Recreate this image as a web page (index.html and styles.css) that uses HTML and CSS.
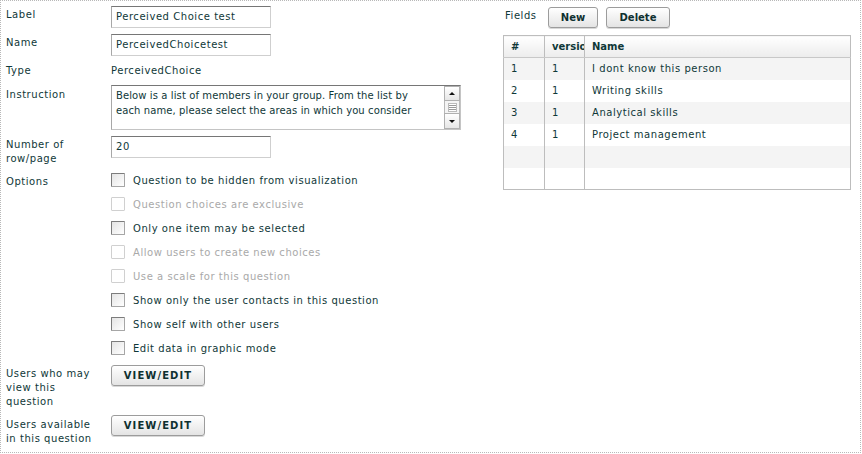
FILE: index.html
```html
<!DOCTYPE html>
<html>
<head>
<meta charset="utf-8">
<link rel="stylesheet" href="styles.css">
</head>
<body>
<div class="page">
  <div class="form">
    <div class="row r-input">
      <div class="lbl">Label</div>
      <div class="field"><div class="input">Perceived Choice test</div></div>
    </div>
    <div class="row r-input">
      <div class="lbl">Name</div>
      <div class="field"><div class="input">PerceivedChoicetest</div></div>
    </div>
    <div class="row r-type">
      <div class="lbl">Type</div>
      <div class="field plain">PerceivedChoice</div>
    </div>
    <div class="row r-area">
      <div class="lbl lbl-area">Instruction</div>
      <div class="field">
        <div class="textarea">
          <div class="ta-text">Below is a list of members in your group. From the list by<br>each name, please select the areas in which you consider</div>
          <div class="sbar">
            <div class="sb-btn"><span class="tri-up"></span></div>
            <div class="sb-thumb"><span class="grip"></span></div>
            <div class="sb-btn sb-down"><span class="tri-down"></span></div>
          </div>
        </div>
      </div>
    </div>
    <div class="row r-num">
      <div class="lbl">Number of<br>row/page</div>
      <div class="field"><div class="input">20</div></div>
    </div>
    <div class="row r-opts">
      <div class="lbl">Options</div>
      <div class="opts">
        <div class="opt"><span class="cb"></span><span>Question to be hidden from visualization</span></div>
        <div class="opt dis"><span class="cb"></span><span>Question choices are exclusive</span></div>
        <div class="opt"><span class="cb"></span><span>Only one item may be selected</span></div>
        <div class="opt dis"><span class="cb"></span><span>Allow users to create new choices</span></div>
        <div class="opt dis"><span class="cb"></span><span>Use a scale for this question</span></div>
        <div class="opt"><span class="cb"></span><span>Show only the user contacts in this question</span></div>
        <div class="opt"><span class="cb"></span><span>Show self with other users</span></div>
        <div class="opt"><span class="cb"></span><span>Edit data in graphic mode</span></div>
      </div>
    </div>
    <div class="row r-users">
      <div class="lbl">Users who may<br>view this<br>question</div>
      <div class="field"><button class="btn vbtn">VIEW/EDIT</button></div>
    </div>
    <div class="row r-users r-users2">
      <div class="lbl">Users available<br>in this question</div>
      <div class="field"><button class="btn vbtn">VIEW/EDIT</button></div>
    </div>
  </div>

  <div class="fields">
    <div class="f-head">
      <span class="f-title">Fields</span>
      <button class="btn sbtn new">New</button>
      <button class="btn sbtn del">Delete</button>
    </div>
    <table class="grid">
      <colgroup><col class="c1"><col class="c2"><col></colgroup>
      <thead>
        <tr><th>#</th><th>version</th><th>Name</th></tr>
      </thead>
      <tbody>
        <tr class="alt"><td>1</td><td>1</td><td>I dont know this person</td></tr>
        <tr><td>2</td><td>1</td><td>Writing skills</td></tr>
        <tr class="alt"><td>3</td><td>1</td><td>Analytical skills</td></tr>
        <tr><td>4</td><td>1</td><td>Project management</td></tr>
        <tr class="alt"><td></td><td></td><td></td></tr>
        <tr><td></td><td></td><td></td></tr>
      </tbody>
    </table>
  </div>
</div>
</body>
</html>
```

FILE: styles.css
```css
html, body {
  margin: 0;
  padding: 0;
  background: #fff;
}
body {
  font-family: "DejaVu Sans", Verdana, sans-serif;
  font-size: 10px;
  letter-spacing: 0.55px;
  color: #0f3838;
}
.page {
  box-sizing: border-box;
  width: 861px;
  height: 453px;
  border: 1px dotted #b8b8b8;
  padding: 5px 9px 0 5px;
  display: grid;
  grid-template-columns: 497px 348px;
  align-items: start;
}
.form {
  display: flex;
  flex-direction: column;
  gap: 6px;
}
.row {
  display: flex;
}
.lbl {
  width: 105px;
  flex: none;
  line-height: 14px;
  padding-top: 2px;
  white-space: nowrap;
}
.field {
  flex: 1;
}
.input {
  box-sizing: border-box;
  width: 160px;
  height: 22px;
  border: 1px solid;
  border-color: #767676 #cfcfcf #cfcfcf #a8a8a8;
  padding: 0 4px;
  line-height: 20px;
  white-space: nowrap;
  overflow: hidden;
}
.r-type .lbl, .r-type .plain {
  padding-top: 0;
  line-height: 17px;
}
.lbl-area {
  padding-top: 3px;
}
.textarea {
  box-sizing: border-box;
  width: 350px;
  height: 45px;
  border: 1px solid;
  border-color: #767676 #c4c4c4 #c4c4c4 #a8a8a8;
  display: flex;
}
.ta-text {
  flex: 1;
  padding: 2px 0 0 4px;
  line-height: 15px;
  letter-spacing: 0.1px;
  white-space: nowrap;
  overflow: hidden;
}
.sbar {
  width: 16px;
  flex: none;
  display: flex;
  flex-direction: column;
  background: #f0f0f0;
}
.sb-btn {
  box-sizing: border-box;
  height: 15px;
  border: 1px solid #b0b0b0;
  background: linear-gradient(#ffffff, #e6e6e6);
  display: flex;
  align-items: center;
  justify-content: center;
}
.sb-down {
  height: 16px;
}
.sb-thumb {
  box-sizing: border-box;
  flex: 1;
  border: 1px solid #b8b8b8;
  border-top: none;
  border-bottom: none;
  background: #f4f4f4;
  display: flex;
  align-items: center;
  justify-content: center;
}
.grip {
  width: 9px;
  height: 9px;
  background: repeating-linear-gradient(#fff 0 1px, #9a9a9a 1px 2px);
  border: 1px solid #bbb;
  box-sizing: border-box;
}
.tri-up {
  width: 0;
  height: 0;
  border-left: 3px solid transparent;
  border-right: 3px solid transparent;
  border-bottom: 3px solid #111;
}
.tri-down {
  width: 0;
  height: 0;
  border-left: 3px solid transparent;
  border-right: 3px solid transparent;
  border-top: 3px solid #111;
}
.r-opts .lbl {
  padding-top: 3px;
}
.r-opts {
  margin-bottom: 3px;
}
.opts {
  display: flex;
  flex-direction: column;
  gap: 8px;
}
.opt {
  height: 16px;
  display: flex;
  align-items: center;
  gap: 8px;
  white-space: nowrap;
}
.opt span:last-child {
  line-height: 14px;
  padding-top: 2px;
}
.cb {
  box-sizing: border-box;
  width: 14px;
  height: 14px;
  flex: none;
  border: 1px solid;
  border-color: #7c7c7c #a6a6a6 #a6a6a6 #7c7c7c;
  border-radius: 1px;
  background: linear-gradient(135deg, #e4e4e4, #ffffff);
}
.opt.dis {
  color: #a9a9a9;
}
.opt.dis .cb {
  border-color: #d0d0d0;
  background: #fff;
}
.r-users .lbl {
  padding-top: 2px;
}
.r-users2 .lbl {
  padding-top: 3px;
}
.btn {
  font-family: "DejaVu Sans", Verdana, sans-serif;
  font-weight: bold;
  color: #0f3030;
  letter-spacing: 0;
  border: 1px solid #9c9c9c;
  border-radius: 3px;
  background: linear-gradient(#ffffff, #e4e4e4);
  box-shadow: 0 1px 0 #d8d8d8;
  padding: 0;
  margin: 0;
  cursor: pointer;
}
.vbtn {
  width: 94px;
  height: 21px;
  font-size: 10px;
  letter-spacing: 1.1px;
}
.fields {
  display: flex;
  flex-direction: column;
  gap: 7px;
}
.f-head {
  display: flex;
  align-items: center;
  height: 22px;
}
.f-title {
  width: 43px;
  padding-left: 2px;
  padding-bottom: 3px;
}
.sbtn {
  height: 21px;
  font-size: 10px;
}
.new {
  width: 50px;
  margin-right: 8px;
}
.del {
  width: 64px;
}
.grid {
  width: 348px;
  border-collapse: collapse;
  table-layout: fixed;
  border: 1px solid #bdbdbd;
}
.grid col.c1 {
  width: 41px;
}
.grid col.c2 {
  width: 40px;
}
.grid th, .grid td {
  height: 22px;
  padding: 0 0 0 7px;
  text-align: left;
  white-space: nowrap;
  overflow: hidden;
  border-left: 1px solid #bdbdbd;
  box-sizing: border-box;
}
.grid th {
  font-weight: bold;
  letter-spacing: 0;
  background: linear-gradient(#ffffff, #ececec);
  border-bottom: 1px solid #c8c8c8;
  height: 22px;
}
.grid tr.alt td {
  background: #f4f4f4;
}
```
